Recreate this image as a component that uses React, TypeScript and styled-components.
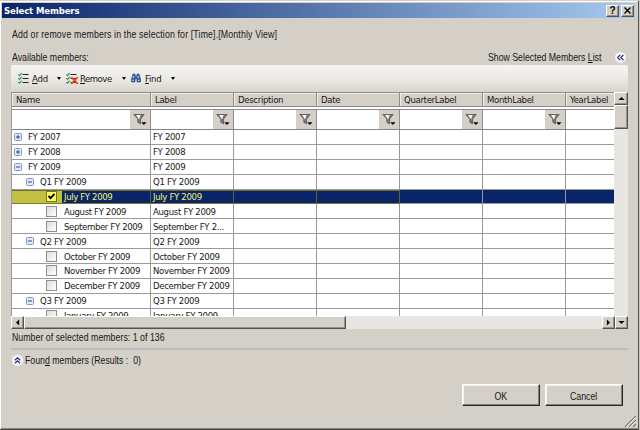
import React from 'react';
import styled, { createGlobalStyle, css } from 'styled-components';

const GlobalStyle = createGlobalStyle`
    * {
        box-sizing: border-box;
    }

    body {
        margin: 0;
        overflow: hidden;
        background-color: #d5d2ca;
    }
`;

const Dialog = styled('div')`
    width: 640px;
    height: 430px;
    overflow: hidden;
    display: flex;
    flex-direction: column;
    padding: 3px 5px 0 2px;
    background-color: #d4d0c8;
    background-image:
        linear-gradient(#fff, #fff),
        linear-gradient(#fff, #fff),
        linear-gradient(#c9c7c2, #c9c7c2),
        linear-gradient(#55534f, #55534f),
        linear-gradient(#85827c, #85827c),
        linear-gradient(#484744, #484744);
    background-size: 1px 428px, 637px 1px, 1px 430px, 1px 430px, 639px 1px, 639px 1px;
    background-position: 0 1px, 0 1px, 639px 0, 638px 1px, 0 428px, 0 429px;
    background-repeat: no-repeat;
    font-family: "DejaVu Sans Condensed", "DejaVu Sans", sans-serif;
    font-size: 9.5px;
    color: #171717;
    white-space: pre;
`;

const Text = styled('span')<{ $spacing?: number; $size?: number; $shift?: number }>`
    display: inline-block;
    font-size: ${({ $size = 9.5 }) => $size}px;
    letter-spacing: ${({ $spacing = 0 }) => $spacing}px;
    margin-left: ${({ $shift = 0 }) => $shift}px;
    line-height: 13px;
`;

const Caption = styled(Text)<{ $origin?: string }>`
    font-family: "Liberation Sans", Arial, sans-serif;
    font-size: 10.7px;
    transform: scaleX(0.82);
    transform-origin: ${({ $origin = 'left' }) => $origin};
`;

const TitleBar = styled('header')`
    height: 15px;
    flex: none;
    display: flex;
    align-items: center;
    padding: 0 1px 0 2px;
    background: linear-gradient(to right, #0a246a, #a6caf0);
    color: #fff;
    font-weight: bold;
`;

const raised = css`
    border: 1px solid;
    border-color: #fff #55534f #55534f #fff;
    box-shadow: inset -1px -1px #96938c;
    background-color: #d4d0c8;
`;

const TitleButton = styled('button')`
    ${raised}
    width: 13px;
    height: 12px;
    margin-left: 2px;
    padding: 0;
    color: #000;
    display: flex;
    align-items: center;
    justify-content: center;

    &:first-of-type {
        margin-left: auto;
    }
`;

const Body = styled('main')`
    padding: 10px 7px 0 9px;
`;

const Intro = styled('div')`
    height: 23px;
    padding: 0 1px;
`;

const Available = styled('div')`
    height: 14px;
    display: flex;
    justify-content: space-between;
    padding: 0 1px;
`;

const ShowList = styled('div')`
    display: flex;
    gap: 13px;
`;

const Toolbar = styled('div')`
    height: 27px;
    display: flex;
    align-items: center;
    padding: 0 7px 1px;
    background: linear-gradient(#f6f5f3, #e9e8e3 55%, #d7d4cc);
    border-radius: 2px 2px 0 0;
`;

const Tool = styled('div')<{ $width: number }>`
    width: ${({ $width }) => $width}px;
    display: flex;
    align-items: center;
`;

const Caret = styled('i')`
    margin: 1px 5px 0 auto;
    border: 2.5px solid transparent;
    border-top: 3px solid #000;
    border-bottom: 0;
`;

const Frame = styled('div')`
    height: 237px;
    display: grid;
    grid-template-columns: 603px 14px;
    grid-template-rows: 224px 13px;
`;

const Table = styled('div')`
    overflow: hidden;
    background-color: #fff;
    border-left: 1px solid #9c9a96;
`;

const columns = '139px repeat(4, 83px) 83px 49px';

const HeaderRow = styled('div')`
    display: grid;
    grid-template-columns: ${columns};
    height: 15px;
    border-top: 1px solid #8e8c88;
    border-bottom: 1px solid #8e8c88;
    background-color: #d4d0c8;
`;

const HeaderCell = styled('div')`
    display: flex;
    align-items: center;
    padding-left: 4px;
    border-right: 1px solid #8e8c88;
    box-shadow: inset 1px 1px #f0eeea;
    overflow: hidden;
`;

const FilterRow = styled('div')`
    display: grid;
    grid-template-columns: ${columns};
    height: 21px;
    margin-top: 2px;
    border-top: 1px solid #8a8a8a;
    border-bottom: 1px solid #858585;
`;

const FilterCell = styled('div')`
    display: flex;
    justify-content: flex-end;
    border-right: 1px solid #8e8e8e;
`;

const FilterButton = styled('div')`
    width: 20px;
    display: flex;
    align-items: center;
    justify-content: center;
    background-color: #d4d0c8;
`;

const Row = styled('div')<{ $selected?: boolean }>`
    display: grid;
    grid-template-columns: ${columns};
    height: 14.9px;
    color: ${({ $selected }) => ($selected ? '#f4f66a' : 'inherit')};
    background-color: ${({ $selected }) => ($selected ? '#0a246a' : '#fff')};
`;

const Cell = styled('div')<{ $marked?: boolean }>`
    display: flex;
    align-items: center;
    overflow: hidden;
    padding-left: 2px;
    border-right: 1px solid ${({ $marked }) => ($marked ? '#626326' : '#989898')};
    border-bottom: 1px solid ${({ $marked }) => ($marked ? '#7b7c32' : '#9a9a9a')};
    box-shadow: ${({ $marked }) => ($marked ? 'inset 0 1px #6c6d33' : 'none')};
`;

const NameCell = styled(Cell)<{ $level: number }>`
    padding-left: ${({ $level }) => [2, 14, 34][$level]}px;
    background: ${({ $marked }) => ($marked ? 'linear-gradient(to right, #c2c040 50px, #0a246a 50px)' : 'none')};
`;

const Expander = styled('svg')`
    flex: none;
    width: 8px;
    height: 8px;
    margin-right: 6px;
`;

const Checkbox = styled('span')<{ $checked?: boolean }>`
    flex: none;
    width: 11px;
    height: 11px;
    margin-right: 7px;
    display: flex;
    border: 1px solid ${({ $checked }) => ($checked ? '#77762a' : '#8f8f8f')};
    background: ${({ $checked }) => ($checked ? '#ffff60' : 'linear-gradient(135deg, #dcdcd8, #fff)')};
`;

const track = 'repeating-conic-gradient(#e4e2dd 0 25%, #ebeae7 0 50%) 0 0 / 2px 2px';

const VerticalBar = styled('div')`
    display: flex;
    flex-direction: column;
    background: ${track};
`;

const HorizontalBar = styled('div')`
    grid-column: 1 / 3;
    display: flex;
    background: ${track};
`;

const ScrollButton = styled('div')`
    ${raised}
    width: 13px;
    height: 13px;
    flex: none;
    display: flex;
    align-items: center;
    justify-content: center;

    ${VerticalBar} & {
        width: 14px;
    }

    ${HorizontalBar} &:nth-child(3) {
        margin-left: auto;
    }
`;

const Thumb = styled('div')<{ $width: number; $height: number }>`
    ${raised}
    width: ${({ $width }) => $width}px;
    height: ${({ $height }) => $height}px;
`;

const Summary = styled('div')`
    height: 19px;
    padding: 2px 1px 0;
`;

const Found = styled('div')`
    height: 36px;
    display: flex;
    align-items: flex-start;
    gap: 1px;
    padding-top: 4px;
    border-top: 2px solid #bdbdc0;
`;

const Buttons = styled('footer')`
    display: flex;
    justify-content: flex-end;
    gap: 5px;
    padding-right: 5px;
`;

const PushButton = styled('button')`
    width: 78px;
    height: 22px;
    padding: 0;
    color: inherit;
    background-color: #d4d0c8;
    border: 1px solid;
    border-color: #fff #292826 #292826 #fff;
    box-shadow: inset -1px -1px #85827b, inset 1px 1px #f4f2ee;
`;

const Grip = styled('svg')`
    display: block;
    margin: 9px -8px 0 auto;
`;

const Chevrons = ({ up }: { up?: boolean }) => (
    <svg width="13" height="13" viewBox="0 0 13 13">
        <circle cx="6.5" cy="6.5" r="5.9" fill="#f7f7fa" stroke="#c4c4d0" strokeWidth=".6" />
        <path
            d="M6.2 3.8 3.7 6.5l2.5 2.7M9.4 3.8 6.9 6.5l2.5 2.7"
            transform={up ? 'rotate(90 6.5 6.5)' : undefined}
            fill="none"
            stroke="#242477"
            strokeWidth="1.2"
        />
    </svg>
);

const ListIcon = ({ remove }: { remove?: boolean }) => (
    <svg width={remove ? 13 : 11} height="13" viewBox={`0 0 ${remove ? 13 : 11} 13`}>
        <path d="m.3 2.4 1.2 1.2L3.7 1M.3 6.2l1.2 1.2 2.2-2.6M.3 10l1.2 1.2 2.2-2.6" fill="none" stroke="#2e9e61" strokeWidth="1.2" />
        <path d="M4.5 2.5h6M4.5 6.5h6M4.5 10.5h6" stroke="#222" strokeWidth="1.2" />
        {remove && <path d="m5.3 5.2 6.5 6.6m0-6.6-6.5 6.6" stroke="#ee4527" strokeWidth="1.8" />}
    </svg>
);

const FindIcon = () => (
    <svg width="10" height="10" viewBox="0 0 10 10">
        <path d="M2 1h2v2h2V1h2l1.5 5v3H6V6H4v3H.5V6z" fill="#3e639f" stroke="#254778" strokeWidth=".6" />
        <path d="M2.3 3v2M7 3v2M1.5 7.5h1.2M7 7.5h1.2" stroke="#c7def5" />
    </svg>
);

const FilterIcon = () => (
    <svg width="14" height="13" viewBox="0 0 14 13">
        <path d="M.8 1.5h10.4L7.6 6v5L4.8 9.2V6z" fill="#777" stroke="#555" strokeWidth=".8" />
        <path d="M3 2h4.6L6 6.6z" fill="#f8f8f8" />
        <path d="M8.3 9.3h5.2L10.9 12z" fill="#000" />
    </svg>
);

const Arrow = ({ turn = 0 }: { turn?: number }) => (
    <svg width="7" height="7" viewBox="0 0 7 7">
        <path d="M.4 5.1 3.5 2l3.1 3.1z" transform={`rotate(${turn} 3.5 3.5)`} fill="#000" />
    </svg>
);

const headers = ['Name', 'Label', 'Description', 'Date', 'QuarterLabel', 'MonthLabel', 'YearLabel'];

interface Member {
    name: string;
    level: number;
    label?: string;
    closed?: boolean;
    selected?: boolean;
}

const members: Member[] = [
    { name: 'FY 2007', level: 0, closed: true },
    { name: 'FY 2008', level: 0, closed: true },
    { name: 'FY 2009', level: 0 },
    { name: 'Q1 FY 2009', level: 1 },
    { name: 'July FY 2009', level: 2, selected: true },
    { name: 'August FY 2009', level: 2 },
    { name: 'September FY 2009', label: 'September FY 2...', level: 2 },
    { name: 'Q2 FY 2009', level: 1 },
    { name: 'October FY 2009', level: 2 },
    { name: 'November FY 2009', level: 2 },
    { name: 'December FY 2009', level: 2 },
    { name: 'Q3 FY 2009', level: 1 },
    { name: 'January FY 2009', level: 2 },
];

const MemberRow = ({ name, label = name, level, closed, selected }: Member) => (
    <Row $selected={selected}>
        <NameCell $level={level} $marked={selected}>
            {level < 2 ? (
                <Expander viewBox="0 0 8 8">
                    <rect x=".5" y=".5" width="7" height="7" rx="1" fill="#e3e9f8" stroke="#8496c5" />
                    <path d={closed ? 'M2 4h4M4 2v4' : 'M2 4h4'} stroke="#24449c" />
                </Expander>
            ) : (
                <Checkbox $checked={selected}>
                    {selected && (
                        <svg width="9" height="9" viewBox="0 0 9 9">
                            <path d="m1.5 4 2 2.2 4-4.2" fill="none" stroke="#000" strokeWidth="1.9" />
                        </svg>
                    )}
                </Checkbox>
            )}
            <Text $spacing={level < 2 ? -0.3 : -0.36}>{name}</Text>
        </NameCell>
        <Cell $marked={selected}><Text $spacing={-0.32}>{label}</Text></Cell>
        {headers.slice(2).map((header, i) => (
            <Cell key={header} $marked={selected && i < 2} />
        ))}
    </Row>
);

export default () => (
    <>
        <GlobalStyle />
        <Dialog>
            <TitleBar>
                <Text $spacing={-0.13}>Select Members</Text>
                <TitleButton><Text $size={10}><b>?</b></Text></TitleButton>
                <TitleButton>
                    <svg width="7" height="7" viewBox="0 0 7 7">
                        <path d="m.5.5 6 6m0-6-6 6" stroke="#000" strokeWidth="1.4" />
                    </svg>
                </TitleButton>
            </TitleBar>
            <Body>
                <Intro><Caption $spacing={0.18}>Add or remove members in the selection for [Time].[Monthly View]</Caption></Intro>
                <Available>
                    <Caption>Available members:</Caption>
                    <ShowList>
                        <Caption $origin="right">Show Selected Members <u>L</u>ist</Caption>
                        <Chevrons />
                    </ShowList>
                </Available>
                <Toolbar>
                    <Tool $width={48}><ListIcon /><Text $shift={3} $spacing={-0.2}><u>A</u>dd</Text><Caret /></Tool>
                    <Tool $width={65}><ListIcon remove /><Text $shift={1} $spacing={-0.5}><u>R</u>emove</Text><Caret /></Tool>
                    <Tool $width={49}><FindIcon /><Text $shift={4} $spacing={-0.3}><u>F</u>ind</Text><Caret /></Tool>
                </Toolbar>
                <Frame>
                    <Table>
                        <HeaderRow>
                            {headers.map(header => (
                                <HeaderCell key={header}><Text $spacing={-0.32}>{header}</Text></HeaderCell>
                            ))}
                        </HeaderRow>
                        <FilterRow>
                            {headers.map((header, i) => (
                                <FilterCell key={header}>
                                    {i < 6 && <FilterButton><FilterIcon /></FilterButton>}
                                </FilterCell>
                            ))}
                        </FilterRow>
                        {members.map(member => <MemberRow key={member.name} {...member} />)}
                    </Table>
                    <VerticalBar>
                        <ScrollButton><Arrow /></ScrollButton>
                        <Thumb $width={14} $height={24} />
                    </VerticalBar>
                    <HorizontalBar>
                        <ScrollButton><Arrow turn={-90} /></ScrollButton>
                        <Thumb $width={322} $height={13} />
                        <ScrollButton><Arrow turn={90} /></ScrollButton>
                        <ScrollButton><Arrow turn={180} /></ScrollButton>
                    </HorizontalBar>
                </Frame>
                <Summary><Caption $spacing={0.04}>Number of selected members: 1 of 136</Caption></Summary>
                <Found>
                    <Chevrons up />
                    <Caption>Foun<u>d</u> members (Results :  0)</Caption>
                </Found>
                <Buttons>
                    <PushButton><Caption $origin="center">OK</Caption></PushButton>
                    <PushButton><Caption $origin="center">Cancel</Caption></PushButton>
                </Buttons>
                <Grip width="12" height="12" viewBox="0 0 12 12">
                    <path d="M1 12 12 1M5 12l7-7M9 12l3-3" stroke="#77746f" strokeWidth="1.2" />
                    <path d="M2.3 12 12 2.3M6.3 12 12 6.3" stroke="#fff" strokeWidth=".8" />
                </Grip>
            </Body>
        </Dialog>
    </>
);
